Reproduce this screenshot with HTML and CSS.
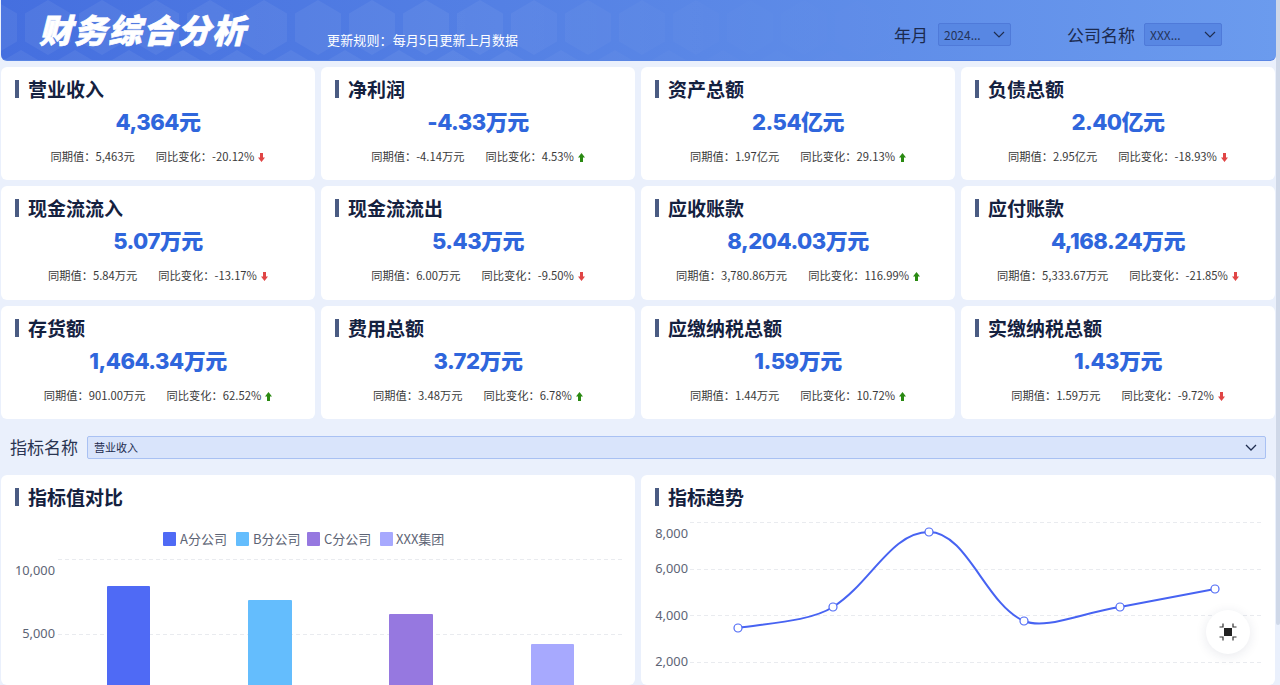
FILE: index.html
```html
<!DOCTYPE html>
<html lang="zh-CN">
<head>
<meta charset="utf-8">
<title>财务综合分析</title>
<link rel="stylesheet" href="styles.css">
</head>
<body>
<main class="page">
  <header class="header">
    <svg class="hex-bg" width="1276" height="61" aria-hidden="true">
      <defs>
        <pattern id="hex" width="54" height="100" patternUnits="userSpaceOnUse" x="20" y="0">
          <path d="M27 0L50 13.500V41.500L27 55L4 41.500V13.500Z" fill="#fff"/>
          <path d="M0 50L23 63.500V100H0ZM54 50L31 63.500V100H54Z" fill="#fff"/>
        </pattern>
        <linearGradient id="hexFade" x1="0" x2="1" y1="0" y2="0">
          <stop offset="0" stop-color="#fff" stop-opacity=".06"/>
          <stop offset=".45" stop-color="#fff" stop-opacity=".055"/>
          <stop offset=".72" stop-color="#fff" stop-opacity=".015"/>
          <stop offset="1" stop-color="#fff" stop-opacity="0"/>
        </linearGradient>
        <mask id="hexMask"><rect width="1000" height="61" fill="url(#hexFade)"/></mask>
      </defs>
      <rect width="1000" height="61" fill="url(#hex)" mask="url(#hexMask)"/>
    </svg>
    <h1 class="brand">财务综合分析</h1>
    <p class="rule">更新规则：每月5日更新上月数据</p>
    <div class="filters">
      <label class="filter-label">年月</label>
      <div class="mini-select select-date"><span>2024...</span><svg class="chev" width="12" height="7" viewBox="0 0 12 7"><path d="M1 1l5 5 5-5" fill="none" stroke="#1f2d50" stroke-width="1.2"/></svg></div>
      <label class="filter-label label-company">公司名称</label>
      <div class="mini-select select-company"><span>XXX...</span><svg class="chev" width="12" height="7" viewBox="0 0 12 7"><path d="M1 1l5 5 5-5" fill="none" stroke="#1f2d50" stroke-width="1.2"/></svg></div>
    </div>
  </header>

  <section class="kpis">
    <article class="card"><h2 class="card-title">营业收入</h2><div class="value">4,364元</div><div class="sub"><span>同期值：5,463元</span><span>同比变化：-20.12%<svg class="arrow down" width="7" height="9" viewBox="0 0 7 9"><path d="M2 0h3v4.5h2L3.5 9 0 4.5h2z"/></svg></span></div></article>
    <article class="card"><h2 class="card-title">净利润</h2><div class="value">-4.33万元</div><div class="sub"><span>同期值：-4.14万元</span><span>同比变化：4.53%<svg class="arrow up" width="7" height="9" viewBox="0 0 7 9"><path d="M2 9h3V4.5h2L3.5 0 0 4.5h2z"/></svg></span></div></article>
    <article class="card"><h2 class="card-title">资产总额</h2><div class="value">2.54亿元</div><div class="sub"><span>同期值：1.97亿元</span><span>同比变化：29.13%<svg class="arrow up" width="7" height="9" viewBox="0 0 7 9"><path d="M2 9h3V4.5h2L3.5 0 0 4.5h2z"/></svg></span></div></article>
    <article class="card"><h2 class="card-title">负债总额</h2><div class="value">2.40亿元</div><div class="sub"><span>同期值：2.95亿元</span><span>同比变化：-18.93%<svg class="arrow down" width="7" height="9" viewBox="0 0 7 9"><path d="M2 0h3v4.5h2L3.5 9 0 4.5h2z"/></svg></span></div></article>
    <article class="card"><h2 class="card-title">现金流流入</h2><div class="value">5.07万元</div><div class="sub"><span>同期值：5.84万元</span><span>同比变化：-13.17%<svg class="arrow down" width="7" height="9" viewBox="0 0 7 9"><path d="M2 0h3v4.5h2L3.5 9 0 4.5h2z"/></svg></span></div></article>
    <article class="card"><h2 class="card-title">现金流流出</h2><div class="value">5.43万元</div><div class="sub"><span>同期值：6.00万元</span><span>同比变化：-9.50%<svg class="arrow down" width="7" height="9" viewBox="0 0 7 9"><path d="M2 0h3v4.5h2L3.5 9 0 4.5h2z"/></svg></span></div></article>
    <article class="card"><h2 class="card-title">应收账款</h2><div class="value">8,204.03万元</div><div class="sub"><span>同期值：3,780.86万元</span><span>同比变化：116.99%<svg class="arrow up" width="7" height="9" viewBox="0 0 7 9"><path d="M2 9h3V4.5h2L3.5 0 0 4.5h2z"/></svg></span></div></article>
    <article class="card"><h2 class="card-title">应付账款</h2><div class="value">4,168.24万元</div><div class="sub"><span>同期值：5,333.67万元</span><span>同比变化：-21.85%<svg class="arrow down" width="7" height="9" viewBox="0 0 7 9"><path d="M2 0h3v4.5h2L3.5 9 0 4.5h2z"/></svg></span></div></article>
    <article class="card"><h2 class="card-title">存货额</h2><div class="value">1,464.34万元</div><div class="sub"><span>同期值：901.00万元</span><span>同比变化：62.52%<svg class="arrow up" width="7" height="9" viewBox="0 0 7 9"><path d="M2 9h3V4.5h2L3.5 0 0 4.5h2z"/></svg></span></div></article>
    <article class="card"><h2 class="card-title">费用总额</h2><div class="value">3.72万元</div><div class="sub"><span>同期值：3.48万元</span><span>同比变化：6.78%<svg class="arrow up" width="7" height="9" viewBox="0 0 7 9"><path d="M2 9h3V4.5h2L3.5 0 0 4.5h2z"/></svg></span></div></article>
    <article class="card"><h2 class="card-title">应缴纳税总额</h2><div class="value">1.59万元</div><div class="sub"><span>同期值：1.44万元</span><span>同比变化：10.72%<svg class="arrow up" width="7" height="9" viewBox="0 0 7 9"><path d="M2 9h3V4.5h2L3.5 0 0 4.5h2z"/></svg></span></div></article>
    <article class="card"><h2 class="card-title">实缴纳税总额</h2><div class="value">1.43万元</div><div class="sub"><span>同期值：1.59万元</span><span>同比变化：-9.72%<svg class="arrow down" width="7" height="9" viewBox="0 0 7 9"><path d="M2 0h3v4.5h2L3.5 9 0 4.5h2z"/></svg></span></div></article>
  </section>

  <section class="metric-row">
    <label class="metric-label">指标名称</label>
    <div class="metric-select"><span>营业收入</span><svg width="12" height="7" viewBox="0 0 12 7"><path d="M1 1l5 5 5-5" fill="none" stroke="#1f2d50" stroke-width="1.3"/></svg></div>
  </section>

  <section class="charts">
    <article class="chart-card">
      <h2 class="card-title">指标值对比</h2>
      <svg class="chart" width="634" height="210" viewBox="0 0 634 210">
        <g class="legend-text">
          <rect x="162" y="57" width="13" height="14" rx="1" fill="#4f6af5"/><text x="179" y="69">A分公司</text>
          <rect x="235" y="57" width="13" height="14" rx="1" fill="#64bdfd"/><text x="252" y="69">B分公司</text>
          <rect x="306" y="57" width="13" height="14" rx="1" fill="#9678e0"/><text x="323" y="69">C分公司</text>
          <rect x="379" y="57" width="13" height="14" rx="1" fill="#a7a9fe"/><text x="395" y="69">XXX集团</text>
        </g>
        <path class="grid" d="M57 84.500H622M57 159.500H622"/>
        <g class="axis-text">
          <text x="54" y="100" text-anchor="end">10,000</text>
          <text x="54" y="163" text-anchor="end">5,000</text>
        </g>
        <rect x="106" y="111" width="43" height="100" rx="1" fill="#4f6af5"/>
        <rect x="247" y="125" width="44" height="90" rx="1" fill="#64bdfd"/>
        <rect x="388" y="139" width="44" height="80" rx="1" fill="#9678e0"/>
        <rect x="530" y="169" width="43" height="50" rx="1" fill="#a7a9fe"/>
      </svg>
    </article>
    <article class="chart-card">
      <h2 class="card-title">指标趋势</h2>
      <svg class="chart" width="634" height="210" viewBox="0 0 634 210">
        <path class="grid" d="M49 47.500H622M49 94.500H622M49 140.500H622M49 187.500H622"/>
        <g class="axis-text">
          <text x="47" y="63" text-anchor="end">8,000</text>
          <text x="47" y="98" text-anchor="end">6,000</text>
          <text x="47" y="145" text-anchor="end">4,000</text>
          <text x="47" y="191" text-anchor="end">2,000</text>
        </g>
        <path class="trend" d="M97 153 C130 148 170 146 192 132 C230 108 250 57 288 57 C326 57 345 130 383 146 C405 155 440 138 479 132 L574 114"/>
        <g class="dots">
          <circle cx="97" cy="153" r="4"/><circle cx="192" cy="132" r="4"/><circle cx="288" cy="57" r="4"/><circle cx="383" cy="146" r="4"/><circle cx="479" cy="132" r="4"/><circle cx="574" cy="114" r="4"/>
        </g>
      </svg>
    </article>
  </section>
</main>
<div class="scroll-thumb"></div>
<button class="fab" aria-label="全屏">
  <svg width="18" height="18" viewBox="0 0 18 18"><rect x="5" y="5" width="8" height="8" fill="#222"/><path d="M4 0.500V4H0.500M14 0.500V4H17.500M4 17.500V14H0.500M14 17.500V14H17.500" fill="none" stroke="#333" stroke-width="1.200"/></svg>
</button>
</body>
</html>
```
FILE: styles.css
```css
* { box-sizing: border-box; }
html, body { margin: 0; height: 685px; overflow: hidden; }
body {
  background: #eaf0fc;
  font-family: "Noto Sans CJK SC", "Noto Sans", sans-serif;
  color: #333;
  position: relative;
}
.page { width: 1276px; padding-left: 1px; }
.header {
  position: relative;
  height: 61px;
  margin-bottom: 6px;
  border-radius: 0 0 6px 6px;
  background: linear-gradient(90deg, #456fdf 0%, #5a87e6 55%, #6b9bee 100%);
  border-bottom: 1px solid #5a86e4;
  display: flex;
  overflow: hidden;
}
.hex-bg { position: absolute; left: 0; top: 0; }
.brand {
  position: relative;
  margin: 0 0 0 38px;
  padding-top: 7px;
  width: 287px;
  font-size: 33px;
  line-height: 44px;
  font-weight: 900;
  font-style: italic;
  letter-spacing: 1.6px;
  -webkit-text-stroke: 0.7px #fff;
  color: #fff;
  white-space: nowrap;
}
.rule {
  position: relative;
  margin: 30px 0 0 1px;
  font-size: 13px;
  line-height: 19px;
  letter-spacing: 0.13px;
  color: #fff;
  white-space: nowrap;
}
.filters {
  position: relative;
  margin-left: auto;
  padding: 23px 54px 0 0;
  display: flex;
  align-items: flex-start;
}
.filter-label { font-size: 17px; line-height: 24px; color: #1c2a4e; margin-right: 10px; }
.label-company { margin-left: 56px; margin-right: 9px; }
.mini-select {
  height: 23px;
  border: 1px solid #4f7ad9;
  border-radius: 2px;
  background: #5887e3;
  display: flex;
  align-items: center;
  justify-content: space-between;
  padding: 0 5px;
  font-size: 12px;
  color: #25345a;
}
.select-date { width: 73px; }
.select-company { width: 78px; }
.kpis {
  display: grid;
  grid-template-columns: repeat(4, 314px);
  grid-auto-rows: 113.300px;
  gap: 6px;
}
.card, .chart-card { background: #fff; border-radius: 6px; }
.card-title {
  display: flex;
  align-items: center;
  margin: 0;
  padding: 10px 0 0 14px;
  font-size: 19px;
  line-height: 24px;
  font-weight: 700;
  color: #14213f;
}
.card-title::before {
  content: "";
  width: 4px;
  height: 18px;
  margin-right: 9px;
  background: #4a5b82;
}
.value {
  margin-top: 6px;
  text-align: center;
  font-family: Inter, "Noto Sans CJK SC", sans-serif;
  font-size: 22px;
  line-height: 30px;
  font-weight: 800;
  letter-spacing: -0.5px;
  color: #2f66dc;
}
.sub {
  margin-top: 11px;
  display: flex;
  justify-content: center;
  gap: 21px;
  font-size: 11.250px;
  line-height: 16px;
  color: #3a3a3a;
}
.arrow { margin-left: 4px; vertical-align: -1px; }
.arrow.down { fill: #e04545; }
.arrow.up { fill: #2a8a12; }
.metric-row {
  margin-top: 17px;
  height: 23px;
  padding: 0 10px 0 9px;
  display: flex;
  align-items: center;
  gap: 9px;
}
.metric-label { font-size: 17px; line-height: 24px; color: #2a3552; white-space: nowrap; }
.metric-select {
  flex: 1;
  height: 23px;
  border: 1px solid #a9c1f3;
  border-radius: 2px;
  background: #d9e4fb;
  display: flex;
  align-items: center;
  justify-content: space-between;
  padding: 0 8px 0 6px;
  font-size: 11px;
  color: #1c2a4e;
}
.charts {
  margin-top: 16px;
  display: grid;
  grid-template-columns: repeat(2, 634px);
  gap: 6px;
}
.chart-card { height: 210px; overflow: hidden; }
.chart { display: block; margin-top: -34px; }
.legend-text text { font-size: 13px; fill: #5d6475; }
.axis-text text { font-size: 12.800px; fill: #5d6475; font-family: "Noto Sans", sans-serif; }
.grid { stroke: #e9ebef; stroke-width: 1; stroke-dasharray: 4 3; fill: none; }
.trend { stroke: #4763f2; stroke-width: 2; fill: none; }
.dots circle { fill: #fff; stroke: #4f6af5; stroke-width: 1.200; }
.scroll-thumb {
  position: absolute;
  right: 0;
  top: 0;
  width: 4px;
  height: 625px;
  background: #cfd8e8;
  border-radius: 0 0 2px 2px;
}
.fab {
  position: absolute;
  left: 1206px;
  top: 610px;
  width: 44px;
  height: 44px;
  padding: 0;
  border: 0;
  border-radius: 50%;
  background: #fff;
  box-shadow: 0 2px 12px rgba(30, 40, 80, .10);
  display: flex;
  align-items: center;
  justify-content: center;
}
```
